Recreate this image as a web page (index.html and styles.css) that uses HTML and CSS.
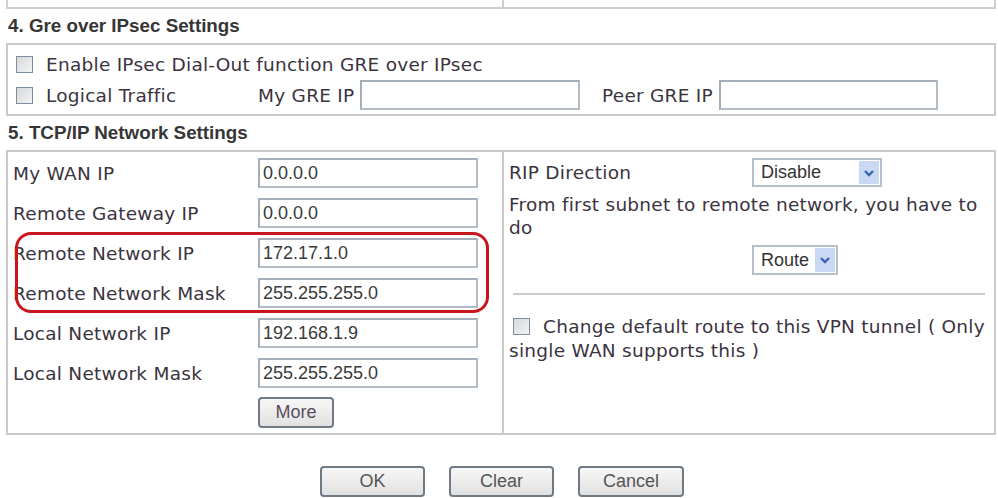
FILE: index.html
```html
<!DOCTYPE html>
<html>
<head>
<meta charset="utf-8">
<link rel="stylesheet" href="styles.css">
</head>
<body>
<div class="page">
  <div class="stub"><div class="stub-l"></div><div class="stub-r"></div></div>

  <div class="heading">4. Gre over IPsec Settings</div>
  <div class="box gre">
    <div class="row">
      <label class="chk"><input type="checkbox"><span>Enable IPsec Dial-Out function GRE over IPsec</span></label>
    </div>
    <div class="row row2">
      <label class="chk w-logical"><input type="checkbox"><span>Logical Traffic</span></label>
      <span class="lbl-mygre">My GRE IP</span><input class="txt w-mygre" type="text">
      <span class="lbl-peer">Peer GRE IP</span><input class="txt w-peer" type="text">
    </div>
  </div>

  <div class="heading">5. TCP/IP Network Settings</div>
  <div class="box tcp">
    <div class="col-left">
      <div class="frow"><span class="flbl">My WAN IP</span><input class="txt w-ip" type="text" value="0.0.0.0"></div>
      <div class="frow"><span class="flbl">Remote Gateway IP</span><input class="txt w-ip" type="text" value="0.0.0.0"></div>
      <div class="frow"><span class="flbl">Remote Network IP</span><input class="txt w-ip" type="text" value="172.17.1.0"></div>
      <div class="frow"><span class="flbl">Remote Network Mask</span><input class="txt w-ip" type="text" value="255.255.255.0"></div>
      <div class="frow"><span class="flbl">Local Network IP</span><input class="txt w-ip" type="text" value="192.168.1.9"></div>
      <div class="frow"><span class="flbl">Local Network Mask</span><input class="txt w-ip" type="text" value="255.255.255.0"></div>
      <div class="more-row"><button class="btn btn-more" type="button">More</button></div>
      <div class="highlight"></div>
    </div>
    <div class="col-right">
      <div class="rip-row">
        <span class="rip-lbl">RIP Direction</span>
        <span class="select sel-disable"><span class="sel-text">Disable</span><span class="sel-arrow"><svg width="12" height="10" viewBox="0 0 12 10"><path d="M2 3 L6 7 L10 3" fill="none" stroke="#3b63b0" stroke-width="2.4"/></svg></span></span>
      </div>
      <p class="subnet">From first subnet to remote network, you have to<br>do</p>
      <div class="route-row">
        <span class="select sel-route"><span class="sel-text">Route</span><span class="sel-arrow"><svg width="12" height="10" viewBox="0 0 12 10"><path d="M2 3 L6 7 L10 3" fill="none" stroke="#3b63b0" stroke-width="2.4"/></svg></span></span>
      </div>
      <div class="sep"></div>
      <p class="defroute"><input type="checkbox" class="cb-inline"><span>Change default route to this VPN tunnel ( Only single WAN supports this )</span></p>
    </div>
  </div>

  <div class="actions">
    <button class="btn btn-act" type="button">OK</button>
    <button class="btn btn-act" type="button">Clear</button>
    <button class="btn btn-act btn-cancel" type="button">Cancel</button>
  </div>
</div>
</body>
</html>
```

FILE: styles.css
```css
html, body {
  margin: 0;
  padding: 0;
  background: #ffffff;
}

body {
  font-family: "DejaVu Sans", Verdana, sans-serif;
  font-size: 18.5px;
  letter-spacing: 0.25px;
  color: #3b3340;
}

.page {
  width: 990px;
  margin-left: 6px;
}

.stub {
  display: flex;
  height: 7px;
  border: 2px solid #cfcfcf;
  border-top: none;
}

.stub-l {
  width: 494px;
  border-right: 2px solid #cfcfcf;
}

.stub-r {
  flex: 1;
}

.heading {
  height: 34px;
  line-height: 34px;
  padding-left: 2px;
  font-family: "Liberation Sans", Arial, sans-serif;
  font-weight: bold;
  font-size: 18.8px;
  letter-spacing: 0;
  color: #363636;
}

.box {
  border: 2px solid #c9c9c9;
}

.gre {
  padding: 4px 0 4px 8px;
}

.row {
  display: flex;
  align-items: center;
  height: 30px;
}

.row2 {
  margin-top: 1px;
}

.chk {
  display: flex;
  align-items: center;
}

input[type="checkbox"] {
  -webkit-appearance: none;
  appearance: none;
  width: 17px;
  height: 17px;
  margin: 0 13px 0 0;
  border: 1px solid #7e8e9c;
  background: linear-gradient(135deg, #d6d8da 0%, #f4f4f4 100%);
  box-sizing: border-box;
  flex: none;
}

.w-logical {
  width: 242px;
}

.lbl-mygre {
  width: 102px;
}

.lbl-peer {
  margin-left: 22px;
  width: 117px;
}

.txt {
  box-sizing: border-box;
  height: 30px;
  margin: 0;
  padding: 0 0 0 3px;
  border: 2px solid #b3bcc5;
  border-top-color: #a4aeb8;
  border-left-color: #a4aeb8;
  background: #ffffff;
  font-family: "Liberation Sans", Arial, sans-serif;
  font-size: 18px;
  letter-spacing: 0;
  color: #3a3a3a;
  outline: none;
}

.w-mygre {
  width: 220px;
}

.w-peer {
  width: 219px;
}

.w-ip {
  width: 220px;
}

.tcp {
  display: flex;
  height: 285px;
  box-sizing: border-box;
}

.col-left {
  position: relative;
  width: 494px;
  padding-top: 1px;
  border-right: 2px solid #c9c9c9;
}

.frow {
  display: flex;
  align-items: center;
  height: 40px;
}

.flbl {
  width: 245px;
  padding-left: 5px;
}

.more-row {
  margin-top: 4px;
  padding-left: 250px;
}

.btn {
  box-sizing: border-box;
  border: 2px solid #6f7a84;
  border-radius: 4px;
  background: linear-gradient(#f7f7f7, #e1e1e1);
  font-family: "Liberation Sans", Arial, sans-serif;
  font-size: 18px;
  letter-spacing: 0;
  color: #555555;
  padding: 0;
  margin: 0;
}

.btn-more {
  width: 76px;
  height: 31px;
  color: #5a4e5c;
}

.highlight {
  position: absolute;
  left: 7px;
  top: 80px;
  width: 474px;
  height: 81px;
  box-sizing: border-box;
  border: 3px solid #c8161e;
  border-radius: 16px;
}

.col-right {
  flex: 1;
  padding: 6px 5px 0 5px;
}

.rip-row {
  display: flex;
  align-items: center;
  height: 29px;
}

.rip-lbl {
  width: 243px;
}

.select {
  box-sizing: border-box;
  display: inline-flex;
  align-items: stretch;
  border: 2px solid #b5c0cc;
  background: #ffffff;
  font-family: "Liberation Sans", Arial, sans-serif;
  font-size: 18px;
  letter-spacing: 0;
  color: #333333;
}

.sel-text {
  flex: 1;
  display: flex;
  align-items: center;
  padding-left: 7px;
}

.sel-arrow {
  width: 20px;
  display: flex;
  align-items: center;
  justify-content: center;
  background: #c9d8f3;
  margin: 1px;
}

.sel-disable {
  width: 130px;
  height: 29px;
}

.subnet {
  margin: 6px 0 0 0;
  line-height: 23px;
}

.route-row {
  margin-top: 6px;
  padding-left: 243px;
  height: 30px;
}

.sel-route {
  width: 86px;
  height: 30px;
}

.sep {
  margin: 18px 4px 0 4px;
  border-top: 2px solid #cccccc;
}

.defroute {
  margin: 20px 0 0 0;
  line-height: 24px;
}

.cb-inline {
  vertical-align: -2px;
  margin: 0 13px 0 4px !important;
}

.actions {
  display: flex;
  justify-content: center;
  gap: 24px;
  margin-top: 31px;
  padding-left: 2px;
}

.btn-act {
  width: 105px;
  height: 31px;
}

.btn-cancel {
  width: 106px;
}
```
